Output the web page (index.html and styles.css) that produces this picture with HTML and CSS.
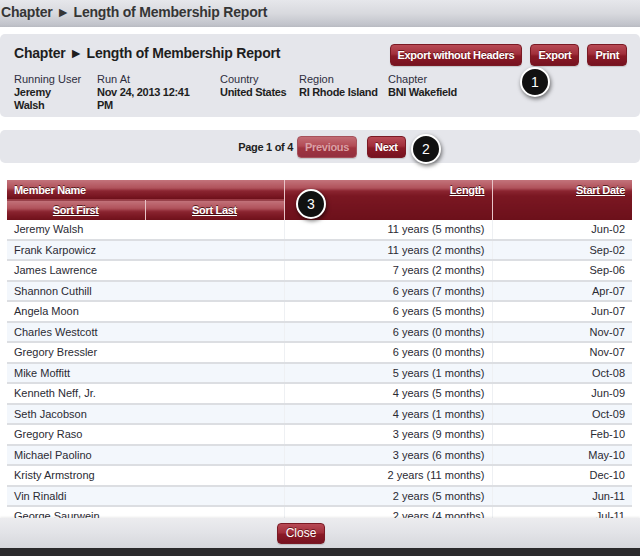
FILE: index.html
```html
<!DOCTYPE html>
<html lang="en">
<head>
    <meta charset="UTF-8">
    <title>Chapter ► Length of Membership Report</title>
    <link rel="stylesheet" href="styles.css">
</head>
<body>
    <div class="dialog">
        <div class="title-bar">Chapter ► Length of Membership Report</div>

        <div class="content">
            <div class="report-head">
                <div class="head-top">
                    <h2>Chapter ► Length of Membership Report</h2>
                    <div class="actions">
                        <button class="btn">Export without Headers</button>
                        <button class="btn">Export</button>
                        <button class="btn">Print</button>
                    </div>
                </div>
                <div class="meta">
                    <div class="meta-item user"><span class="label">Running User</span><span class="value">Jeremy Walsh</span></div>
                    <div class="meta-item run"><span class="label">Run At</span><span class="value">Nov 24, 2013 12:41 PM</span></div>
                    <div class="meta-item"><span class="label">Country</span><span class="value">United States</span></div>
                    <div class="meta-item"><span class="label">Region</span><span class="value">RI Rhode Island</span></div>
                    <div class="meta-item"><span class="label">Chapter</span><span class="value">BNI Wakefield</span></div>
                </div>
                <span class="badge badge-export">1</span>
            </div>

            <div class="pager">
                <span class="page-info">Page 1 of 4</span>
                <button class="btn disabled">Previous</button>
                <button class="btn next">Next</button>
                <span class="badge badge-pager">2</span>
            </div>

            <div class="table-wrap">
                <table class="report">
                    <colgroup>
                        <col class="c-first">
                        <col class="c-last">
                        <col class="c-length">
                        <col class="c-date">
                    </colgroup>
                    <thead>
                        <tr>
                            <th colspan="2" class="name-head">Member Name</th>
                            <th rowspan="2" class="num tall"><a>Length</a></th>
                            <th rowspan="2" class="num tall"><a>Start Date</a></th>
                        </tr>
                        <tr>
                            <th class="sort"><a>Sort First</a></th>
                            <th class="sort"><a>Sort Last</a></th>
                        </tr>
                    </thead>
                    <tbody>
                        <tr><td colspan="2">Jeremy Walsh</td><td class="num">11 years (5 months)</td><td class="num">Jun-02</td></tr>
                        <tr><td colspan="2">Frank Karpowicz</td><td class="num">11 years (2 months)</td><td class="num">Sep-02</td></tr>
                        <tr><td colspan="2">James Lawrence</td><td class="num">7 years (2 months)</td><td class="num">Sep-06</td></tr>
                        <tr><td colspan="2">Shannon Cuthill</td><td class="num">6 years (7 months)</td><td class="num">Apr-07</td></tr>
                        <tr><td colspan="2">Angela Moon</td><td class="num">6 years (5 months)</td><td class="num">Jun-07</td></tr>
                        <tr><td colspan="2">Charles Westcott</td><td class="num">6 years (0 months)</td><td class="num">Nov-07</td></tr>
                        <tr><td colspan="2">Gregory Bressler</td><td class="num">6 years (0 months)</td><td class="num">Nov-07</td></tr>
                        <tr><td colspan="2">Mike Moffitt</td><td class="num">5 years (1 months)</td><td class="num">Oct-08</td></tr>
                        <tr><td colspan="2">Kenneth Neff, Jr.</td><td class="num">4 years (5 months)</td><td class="num">Jun-09</td></tr>
                        <tr><td colspan="2">Seth Jacobson</td><td class="num">4 years (1 months)</td><td class="num">Oct-09</td></tr>
                        <tr><td colspan="2">Gregory Raso</td><td class="num">3 years (9 months)</td><td class="num">Feb-10</td></tr>
                        <tr><td colspan="2">Michael Paolino</td><td class="num">3 years (6 months)</td><td class="num">May-10</td></tr>
                        <tr><td colspan="2">Kristy Armstrong</td><td class="num">2 years (11 months)</td><td class="num">Dec-10</td></tr>
                        <tr><td colspan="2">Vin Rinaldi</td><td class="num">2 years (5 months)</td><td class="num">Jun-11</td></tr>
                        <tr><td colspan="2">George Saurwein</td><td class="num">2 years (4 months)</td><td class="num">Jul-11</td></tr>
                    </tbody>
                </table>
                <span class="badge badge-table">3</span>
            </div>
        </div>

        <div class="footer">
            <button class="btn">Close</button>
        </div>
        <div class="bottom-strip"></div>
    </div>
</body>
</html>
```

FILE: styles.css
```css
html, body {
    margin: 0;
    padding: 0;
    height: 100%;
}

body {
    font-family: "Liberation Sans", Arial, sans-serif;
    font-size: 11px;
    color: #333;
    background-color: #ffffff;
    overflow: hidden;
}

.dialog {
    display: flex;
    flex-direction: column;
    height: 556px;
}

.title-bar {
    height: 27px;
    line-height: 25px;
    padding-left: 1px;
    font-size: 14px;
    font-weight: bold;
    letter-spacing: -0.2px;
    color: #353535;
    background: linear-gradient(to bottom, #e6e7eb 0, #d8d9de 50%, #c2c4cb 90%, #b9bbc2 100%);
    flex-shrink: 0;
}

.content {
    flex: 1;
    overflow: hidden;
    padding-top: 7px;
}

/* report header panel */
.report-head {
    position: relative;
    background-color: #e5e6eb;
    border-radius: 5px;
    padding: 10px 13px 5px 14px;
}

.head-top {
    display: flex;
    justify-content: space-between;
    align-items: flex-start;
}

.head-top h2 {
    margin: 0;
    font-size: 14px;
    letter-spacing: -0.2px;
    line-height: 18px;
    color: #1e1e1e;
}

.actions {
    display: flex;
    gap: 8px;
}

.btn {
    font-family: "Liberation Sans", Arial, sans-serif;
    font-size: 11px;
    font-weight: bold;
    letter-spacing: -0.3px;
    color: #ffffff;
    text-shadow: 0 -1px 0 rgba(60, 0, 0, 0.6);
    height: 22px;
    padding: 0 7px;
    border: 1px solid #7a1a24;
    border-radius: 4px;
    background: linear-gradient(to bottom, #b84a55 0, #a12f3b 45%, #8a1a26 55%, #761220 100%);
    box-shadow: 0 1px 1px rgba(0, 0, 0, 0.15);
    cursor: pointer;
}

.btn.disabled {
    color: #d9a0a6;
    text-shadow: none;
    background: linear-gradient(to bottom, #c26c74 0, #b24b55 45%, #a0343f 55%, #933040 100%);
    border-color: #a6525b;
}

.meta {
    display: grid;
    grid-template-columns: 83px 123px 79px 89px auto;
    margin-top: 7px;
    line-height: 13px;
}

.meta-item {
    display: flex;
    flex-direction: column;
}

.meta-item.user .value {
    max-width: 66px;
}

.meta-item.run .value {
    max-width: 110px;
}

.label {
    color: #2e2e3e;
}

.value {
    font-weight: bold;
    letter-spacing: -0.3px;
    color: #1e1e1e;
}

/* badges lying over the screenshot */
.badge {
    position: absolute;
    width: 26px;
    height: 26px;
    line-height: 26px;
    border-radius: 50%;
    background-color: #111;
    border: 2px solid #ffffff;
    box-shadow: 1px 2px 4px rgba(0, 0, 0, 0.55);
    color: #ffffff;
    font-size: 14px;
    text-align: center;
}

.badge-export {
    top: 33px;
    left: 520px;
}

.badge-pager {
    top: 4px;
    left: 411px;
}

.badge-table {
    top: 9px;
    left: 289px;
}

/* pager */
.pager {
    position: relative;
    margin-top: 13px;
    height: 33px;
    background-color: #e5e6eb;
    border-radius: 5px;
    display: flex;
    align-items: center;
    justify-content: center;
    padding-left: 4px;
}

.page-info {
    font-weight: bold;
    letter-spacing: -0.3px;
    color: #1e1e1e;
    margin-right: 4px;
}

.pager .next {
    margin-left: 10px;
}

/* table */
.table-wrap {
    position: relative;
    margin: 17px 8px 0 7px;
}

.report {
    width: 625px;
    border-collapse: collapse;
    table-layout: fixed;
}

.c-first { width: 138px; }
.c-last { width: 139px; }
.c-length { width: 208px; }
.c-date { width: 140px; }

.report th {
    color: #ffffff;
    font-weight: bold;
    letter-spacing: -0.3px;
    text-shadow: 0 -1px 0 rgba(40, 0, 0, 0.7);
    padding: 0 6px;
    border-left: 1px solid #e8c4c8;
    background: linear-gradient(to bottom, #c3737b 0, #b0525b 8px, #8a2430 11px, #7a1722 16px, #6c101a 100%);
    text-align: center;
}

.report th:first-child {
    border-left: none;
}

.report th a {
    text-decoration: underline;
}

.report .name-head {
    height: 19px;
    text-align: left;
    padding-left: 7px;
}

.report .sort {
    height: 20px;
    border-top: 1px solid #9a3a44;
}

.report th.tall {
    vertical-align: top;
    padding-top: 4px;
    text-align: right;
    padding-right: 7px;
}

.report td {
    height: 18.5px;
    padding: 0 7px;
    border-bottom: 2px solid #dcdee2;
    border-left: 1px solid #eef0f3;
    color: #2a2a33;
    white-space: nowrap;
}

.report td:first-child {
    border-left: none;
}

.report td.num {
    text-align: right;
}

.report tbody tr:nth-child(even) td {
    background-color: #f3f7fc;
}

/* footer */
.footer {
    flex-shrink: 0;
    height: 30px;
    display: flex;
    justify-content: center;
    align-items: center;
    padding-right: 38px;
    background: linear-gradient(to bottom, #ececef 0, #e2e3e7 50%, #d6d7dc 100%);
    box-shadow: 0 -1px 2px rgba(0, 0, 0, 0.08);
    position: relative;
}

.footer .btn {
    height: 21px;
    padding: 0 8px;
    font-weight: normal;
    font-size: 12px;
    letter-spacing: 0;
}

.bottom-strip {
    flex-shrink: 0;
    height: 8px;
    background-color: #2b2a2c;
}
```
